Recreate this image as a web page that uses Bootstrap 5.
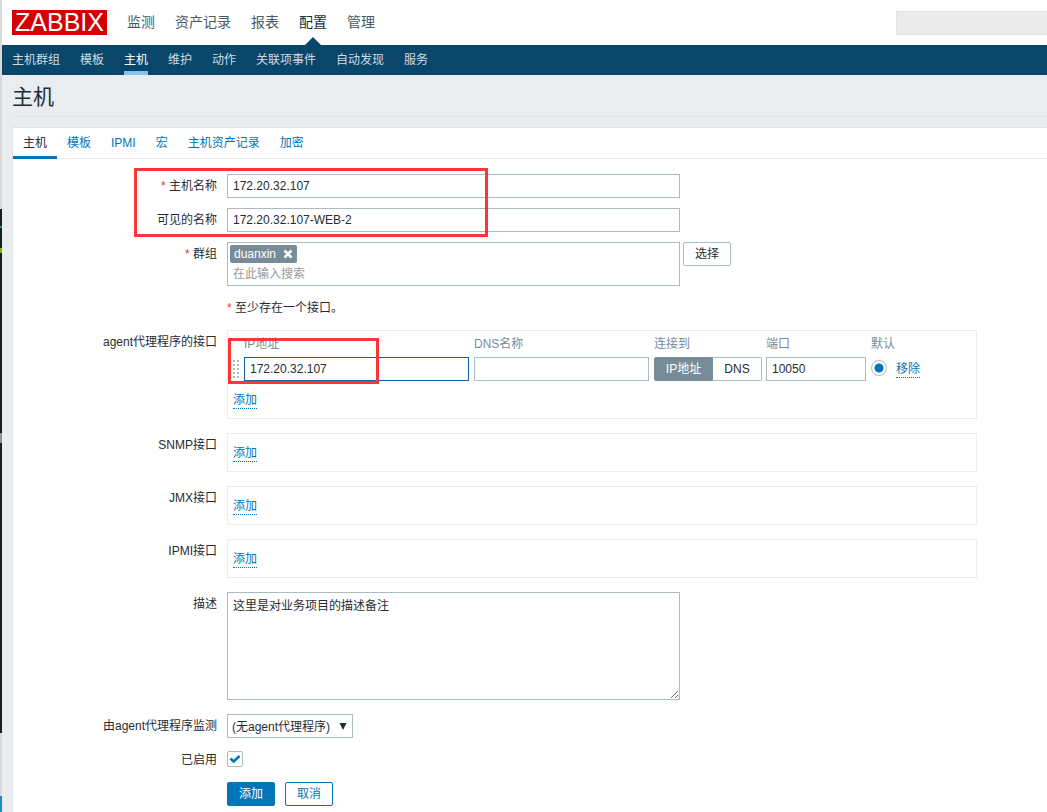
<!DOCTYPE html>
<html lang="zh-CN">
<head>
<meta charset="utf-8">
<meta name="viewport" content="width=device-width, initial-scale=1">
<title>主机</title>
<link href="https://cdn.jsdelivr.net/npm/bootstrap@5.3.0/dist/css/bootstrap.min.css" rel="stylesheet">
<script src="https://cdn.jsdelivr.net/npm/bootstrap@5.3.0/dist/js/bootstrap.bundle.min.js"></script>
<style>
  :root { --zx-blue: #0275b8; --zx-navy: #0a466a; --zx-line: #dfe4e7; --zx-edge: #acbbc2; --zx-text: #1f2c33; --zx-slate: #768d99; }
  body { font: 12px/24px "Liberation Sans", "Noto Sans CJK SC", sans-serif; color: var(--zx-text); background: #e9edf0; }
  .edge-strip { width: 2px; flex: none; background:
    linear-gradient(#d9d9d9 0 209px, #1c1c18 209px 226px, #1b8fa0 226px 228px, #1c1c18 228px 248px, #76b900 248px 253px, #1c1c18 253px 433px, #8d9494 433px 443px, #1c1c18 443px 733px, #d9d9d9 733px 796px, #1e88c9 796px); }
  .topbar { height: 45px; padding-left: 10px; }
  .menu-row { display: flex; gap: 20px; }
  .brand { background: #d40000; color: #fff; font-size: 25px; line-height: 25px; width: 95px; height: 25px; text-align: center; text-decoration: none; }
  .topbar .menu-link { font-size: 14px; line-height: 45px; color: #4a5a64; text-decoration: none; position: relative; }
  .topbar .menu-link.active { color: var(--zx-text); }
  .topbar .menu-link.active::after { content: ""; position: absolute; left: 50%; bottom: 0; margin-left: -8px; border: 8px solid transparent; border-top: 0; border-bottom-color: var(--zx-navy); }
  .top-search { width: 151px; height: 24px; background: #ebebeb; border: 1px solid #e3e3e3; border-right: 0; }
  .subbar { background: var(--zx-navy); height: 30px; padding-left: 10px; }
  .subbar a { color: #cfdce4; line-height: 30px; height: 30px; text-decoration: none; }
  .subbar a.active { color: #fff; border-bottom: 4px solid #83c5f0; }
  main { padding-left: 10px; }
  .page-title { font-size: 21px; line-height: 43px; height: 42px; border-bottom: 1px solid var(--zx-line); font-weight: 400; margin: 0 0 10px; }
  .panel { background: #fff; border: solid var(--zx-line); border-width: 1px 0 0 1px; }
  .nav-tabs.host-tabs { border-bottom: 1px solid #ebeef0; }
  .host-tabs .nav-link { padding: 0 10px; height: 31px; line-height: 30px; border: 0; border-radius: 0; color: var(--zx-blue); margin: 0 0 -1px; }
  .host-tabs .nav-link.active { color: var(--zx-text); background: none; border-bottom: 3px solid var(--zx-blue); }
  .host-form { padding-top: 15px; }
  .form-line { display: flex; gap: 10px; margin-bottom: 10px; }
  .form-line.wide { margin-bottom: 14px; }
  .line-label { width: 204px; flex: none; text-align: right; }
  .req { color: #e33734; }
  .form-control, .form-select { font-size: 12px; line-height: 22px; height: 24px; min-height: 24px; padding: 0 5px; border: 1px solid var(--zx-edge); border-radius: 0; color: var(--zx-text); }
  .field { flex: 0 1 453px; width: 453px; min-width: 0; }
  textarea.form-control { height: 108px; line-height: 18px; padding: 4px 5px; }
  .group-pick { border: 1px solid var(--zx-edge); padding: 2px; height: 44px; }
  .group-tag { display: flex; width: 67px; height: 18px; line-height: 18px; padding: 0 4px; background: var(--zx-slate); color: #fff; border-radius: 2px; }
  .group-tag button { border: 0; background: none; padding: 0; color: #fff; display: flex; align-items: center; }
  .group-pick input { display: block; width: 100%; height: 22px; border: 0; padding: 0 3px; outline: 0; background: none; }
  .group-pick input::placeholder { color: #999; }
  .btn { font-size: 12px; line-height: 23px; height: 24px; padding: 0 11px; border-radius: 2px; }
  .btn-plain { border-color: var(--zx-edge); color: var(--zx-text); background: #fff; margin-left: -7px; }
  .btn-primary { background: var(--zx-blue); border-color: var(--zx-blue); }
  .btn-outline-primary { color: var(--zx-blue); border-color: var(--zx-blue); }
  .iface-box { flex: 0 1 750px; width: 750px; border: 1px solid #ebeef0; padding: 0 5px; min-height: 39px; position: relative; }
  .iface-box .add-line { line-height: 38px; height: 37px; }
  .dotted { display: inline-block; line-height: 15px; color: var(--zx-blue); text-decoration: none; border-bottom: 1px dotted var(--zx-blue); }
  .iface-table th { font-weight: 400; line-height: 26px; color: var(--zx-slate); padding: 0; }
  .iface-table td { padding: 0 5px 0 0; vertical-align: top; height: 24px; }
  .iface-table td:first-child { padding: 0; }
  .iface-table .form-control.current { border-color: #0a639c; }
  .col-grip { width: 11px; }
  .col-ip { width: 230px; }
  .col-dns { width: 180px; }
  .col-via { width: 112px; }
  .col-port { width: 105px; }
  .col-main { width: 25px; }
  .grip { display: block; margin-top: 3px; cursor: move; }
  .seg { display: flex; width: 108px; }
  .seg label { border: 1px solid var(--zx-edge); height: 24px; line-height: 22px; text-align: center; flex: 0 0 49px; background: #fff; border-left: 0; border-radius: 0 2px 2px 0; }
  .seg label:first-of-type { flex-basis: 59px; border-left: 1px solid var(--zx-edge); border-radius: 2px 0 0 2px; }
  .seg .btn-check:checked + label { background: var(--zx-slate); border-color: var(--zx-slate); color: #fff; }
  .form-check-input { width: 16px; height: 16px; margin: 3px 0 0; display: block; border: 1px solid var(--zx-edge); background-size: 16px 16px; background-position: center; }
  .form-check-input[type=checkbox] { border-radius: 2px; }
  .form-check-input:checked { background-color: #fff; border-color: var(--zx-edge); }
  .form-check-input:checked[type=radio] { background-image: radial-gradient(circle, #0275b8 0 4px, transparent 5px); }
  .form-check-input:checked[type=checkbox] { background-image: url("data:image/svg+xml,%3Csvg xmlns='http://www.w3.org/2000/svg' viewBox='0 0 16 16'%3E%3Cpath d='M3.500 7.500l3.200 3 5.800-5.500' fill='none' stroke='%230275b8' stroke-width='2.6'/%3E%3C/svg%3E"); }
  .form-select { width: 126px; line-height: 24px; padding: 0 20px 0 4px; background-image: url("data:image/svg+xml,%3Csvg xmlns='http://www.w3.org/2000/svg' viewBox='0 0 8 8'%3E%3Cpath d='M.5 1h7L4 8z' fill='%231f2c33'/%3E%3C/svg%3E"); background-size: 8px 8px; background-position: right 5px top 7px; }
  .callout-frame { position: absolute; border: 3px solid #fc3637; pointer-events: none; z-index: 2; }
  .frame-names { left: 121px; top: -6px; width: 354px; height: 69px; }
  .frame-address { left: 0; top: 7px; width: 151px; height: 46px; }
</style>
</head>
<body>
<div class="d-flex min-vh-100">
  <div class="edge-strip" aria-hidden="true"></div>
  <div class="d-flex flex-column flex-grow-1">
    <header>
      <div class="topbar bg-white d-flex">
        <div class="menu-row align-items-center me-auto">
          <a class="brand" href="#">ZABBIX</a>
          <nav class="menu-row" aria-label="主菜单">
            <a class="menu-link" href="#">监测</a>
            <a class="menu-link" href="#">资产记录</a>
            <a class="menu-link" href="#">报表</a>
            <a class="menu-link active" href="#">配置</a>
            <a class="menu-link" href="#">管理</a>
          </nav>
        </div>
        <input class="top-search align-self-center" type="search" aria-label="搜索">
      </div>
      <nav class="subbar menu-row" aria-label="子菜单">
        <a href="#">主机群组</a>
        <a href="#">模板</a>
        <a class="active" href="#">主机</a>
        <a href="#">维护</a>
        <a href="#">动作</a>
        <a href="#">关联项事件</a>
        <a href="#">自动发现</a>
        <a href="#">服务</a>
      </nav>
    </header>
    <main class="d-flex flex-column flex-grow-1">
      <h1 class="page-title">主机</h1>
      <section class="panel flex-grow-1">
        <nav class="nav nav-tabs host-tabs">
          <a class="nav-link active" href="#">主机</a>
          <a class="nav-link" href="#">模板</a>
          <a class="nav-link" href="#">IPMI</a>
          <a class="nav-link" href="#">宏</a>
          <a class="nav-link" href="#">主机资产记录</a>
          <a class="nav-link" href="#">加密</a>
        </nav>
        <form class="host-form">
          <div class="position-relative">
            <div class="form-line">
              <label class="line-label" for="host"><span class="req">*</span> 主机名称</label>
              <input class="form-control field" id="host" type="text" value="172.20.32.107">
            </div>
            <div class="form-line">
              <label class="line-label" for="visible">可见的名称</label>
              <input class="form-control field" id="visible" type="text" value="172.20.32.107-WEB-2">
            </div>
            <div class="callout-frame frame-names"></div>
          </div>
          <div class="form-line">
            <label class="line-label" for="groups"><span class="req">*</span> 群组</label>
            <div class="group-pick field">
              <div class="group-tag justify-content-between">duanxin
                <button type="button" aria-label="移除 duanxin"><svg width="10" height="10" viewBox="0 0 10 10"><path d="M1.5 1.5l7 7M8.5 1.5l-7 7" stroke="#fff" stroke-width="2.6"/></svg></button>
              </div>
              <input id="groups" type="text" placeholder="在此输入搜索">
            </div>
            <button class="btn btn-plain" type="button">选择</button>
          </div>
          <div class="form-line">
            <div class="line-label"></div>
            <div><span class="req">*</span> 至少存在一个接口。</div>
          </div>
          <div class="form-line wide">
            <div class="line-label">agent代理程序的接口</div>
            <div class="iface-box">
              <table class="iface-table">
                <colgroup><col class="col-grip"><col class="col-ip"><col class="col-dns"><col class="col-via"><col class="col-port"><col class="col-main"><col></colgroup>
                <thead>
                  <tr><th></th><th>IP地址</th><th>DNS名称</th><th>连接到</th><th>端口</th><th colspan="2">默认</th></tr>
                </thead>
                <tbody>
                  <tr>
                    <td><svg class="grip" width="6" height="18" viewBox="0 0 6 18" fill="#acbbc2"><path d="M0 0h2v2H0zM4 0h2v2H4zM0 4h2v2H0zM4 4h2v2H4zM0 8h2v2H0zM4 8h2v2H4zM0 12h2v2H0zM4 12h2v2H4zM0 16h2v2H0zM4 16h2v2H4z"/></svg></td>
                    <td><input class="form-control current" type="text" aria-label="IP地址" value="172.20.32.107"></td>
                    <td><input class="form-control" type="text" aria-label="DNS名称"></td>
                    <td class="pe-1"><div class="seg">
                      <input class="btn-check" type="radio" name="via" id="via-ip" checked><label for="via-ip">IP地址</label>
                      <input class="btn-check" type="radio" name="via" id="via-dns"><label for="via-dns">DNS</label>
                    </div></td>
                    <td><input class="form-control" type="text" aria-label="端口" value="10050"></td>
                    <td><input class="form-check-input" type="radio" name="main" aria-label="默认" checked></td>
                    <td><a class="dotted" href="#">移除</a></td>
                  </tr>
                </tbody>
              </table>
              <div class="add-line"><a class="dotted" href="#">添加</a></div>
              <div class="callout-frame frame-address"></div>
            </div>
          </div>
          <div class="form-line wide">
            <div class="line-label">SNMP接口</div>
            <div class="iface-box"><div class="add-line"><a class="dotted" href="#">添加</a></div></div>
          </div>
          <div class="form-line wide">
            <div class="line-label">JMX接口</div>
            <div class="iface-box"><div class="add-line"><a class="dotted" href="#">添加</a></div></div>
          </div>
          <div class="form-line wide">
            <div class="line-label">IPMI接口</div>
            <div class="iface-box"><div class="add-line"><a class="dotted" href="#">添加</a></div></div>
          </div>
          <div class="form-line wide">
            <label class="line-label" for="descr">描述</label>
            <textarea class="form-control field" id="descr">这里是对业务项目的描述备注</textarea>
          </div>
          <div class="form-line">
            <label class="line-label" for="proxy">由agent代理程序监测</label>
            <select class="form-select" id="proxy"><option>(无agent代理程序)</option></select>
          </div>
          <div class="form-line">
            <label class="line-label" for="enabled">已启用</label>
            <input class="form-check-input" id="enabled" type="checkbox" checked>
          </div>
          <div class="form-line mb-0">
            <div class="line-label"></div>
            <button class="btn btn-primary" type="submit">添加</button>
            <button class="btn btn-outline-primary" type="button">取消</button>
          </div>
        </form>
      </section>
    </main>
  </div>
</div>
</body>
</html>
